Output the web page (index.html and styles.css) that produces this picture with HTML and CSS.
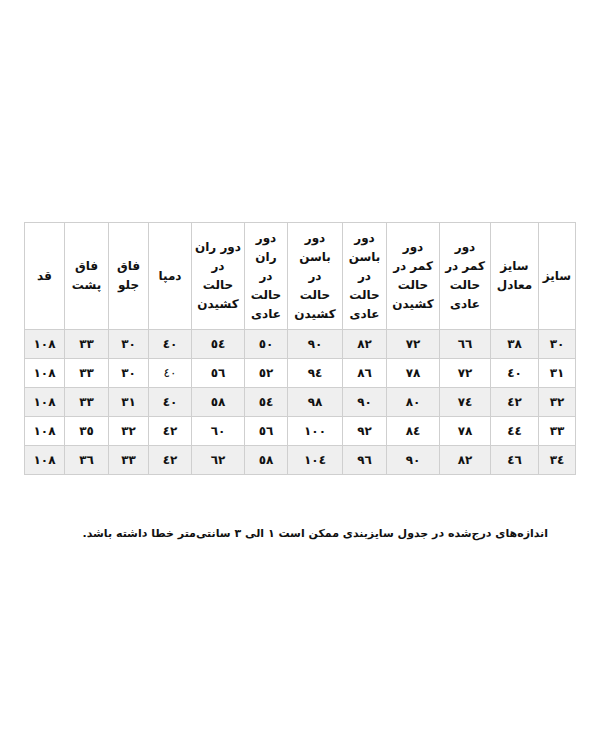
FILE: index.html
```html
<!DOCTYPE html>
<html lang="fa">
<head>
<meta charset="utf-8">
<link rel="stylesheet" href="styles.css">
</head>
<body>
<div class="page">
  <table class="sizes" dir="rtl">
    <colgroup>
      <col class="c37"><col class="c48"><col class="c51"><col class="c53"><col class="c44"><col class="c55">
      <col class="c43"><col class="c53"><col class="c43"><col class="c40"><col class="c44"><col class="c40">
    </colgroup>
    <thead>
      <tr>
        <th>سایز</th>
        <th>سایز<br>معادل</th>
        <th>دور<br>کمر در<br>حالت<br>عادی</th>
        <th>دور<br>کمر در<br>حالت<br>کشیدن</th>
        <th>دور<br>باسن<br>در<br>حالت<br>عادی</th>
        <th>دور<br>باسن<br>در<br>حالت<br>کشیدن</th>
        <th>دور<br>ران<br>در<br>حالت<br>عادی</th>
        <th>دور ران<br>در<br>حالت<br>کشیدن</th>
        <th>دمپا</th>
        <th>فاق<br>جلو</th>
        <th>فاق<br>پشت</th>
        <th>قد</th>
      </tr>
    </thead>
    <tbody>
      <tr class="alt"><td>٣٠</td><td>٣٨</td><td>٦٦</td><td>٧٢</td><td>٨٢</td><td>٩٠</td><td>٥٠</td><td>٥٤</td><td>٤٠</td><td>٣٠</td><td>٣٣</td><td>١٠٨</td></tr>
      <tr><td>٣١</td><td>٤٠</td><td>٧٢</td><td>٧٨</td><td>٨٦</td><td>٩٤</td><td>٥٢</td><td>٥٦</td><td class="light">٤٠</td><td>٣٠</td><td>٣٣</td><td>١٠٨</td></tr>
      <tr class="alt"><td>٣٢</td><td>٤٢</td><td>٧٤</td><td>٨٠</td><td>٩٠</td><td>٩٨</td><td>٥٤</td><td>٥٨</td><td>٤٠</td><td>٣١</td><td>٣٣</td><td>١٠٨</td></tr>
      <tr><td>٣٣</td><td>٤٤</td><td>٧٨</td><td>٨٤</td><td>٩٢</td><td>١٠٠</td><td>٥٦</td><td>٦٠</td><td>٤٢</td><td>٣٢</td><td>٣٥</td><td>١٠٨</td></tr>
      <tr class="alt"><td>٣٤</td><td>٤٦</td><td>٨٢</td><td>٩٠</td><td>٩٦</td><td>١٠٤</td><td>٥٨</td><td>٦٢</td><td>٤٢</td><td>٣٣</td><td>٣٦</td><td>١٠٨</td></tr>
    </tbody>
  </table>
  <p class="note" dir="rtl">اندازه‌های درج‌شده در جدول سایزبندی ممکن است ١ الی ٣ سانتی‌متر خطا داشته باشد.</p>
</div>
</body>
</html>
```
FILE: styles.css
```css
html, body {
  margin: 0;
  padding: 0;
  background: #ffffff;
}
body {
  font-family: "DejaVu Sans", "Noto Sans", sans-serif;
  color: #111111;
}
.page {
  width: 600px;
  height: 750px;
  padding-top: 222px;
  box-sizing: border-box;
}
.sizes {
  margin-left: 24px;
  width: 551px;
  border-collapse: collapse;
  table-layout: fixed;
}
.c37 { width: 37px; }
.c40 { width: 40px; }
.c43 { width: 43px; }
.c44 { width: 44px; }
.c48 { width: 48px; }
.c51 { width: 51px; }
.c53 { width: 53px; }
.c55 { width: 55px; }
.sizes th,
.sizes td {
  border: 1px solid #cfcfcf;
  text-align: center;
  vertical-align: middle;
  padding: 0;
}
.sizes th {
  height: 106px;
  font-size: 12px;
  font-weight: bold;
  line-height: 19px;
}
.sizes td {
  height: 28px;
  font-size: 12px;
  font-weight: bold;
}
.sizes tr.alt td {
  background: #efefef;
}
.sizes td.light {
  font-weight: normal;
}
.note {
  margin: 52px 52px 0 0;
  font-size: 11px;
  font-weight: bold;
  text-align: right;
}
```
